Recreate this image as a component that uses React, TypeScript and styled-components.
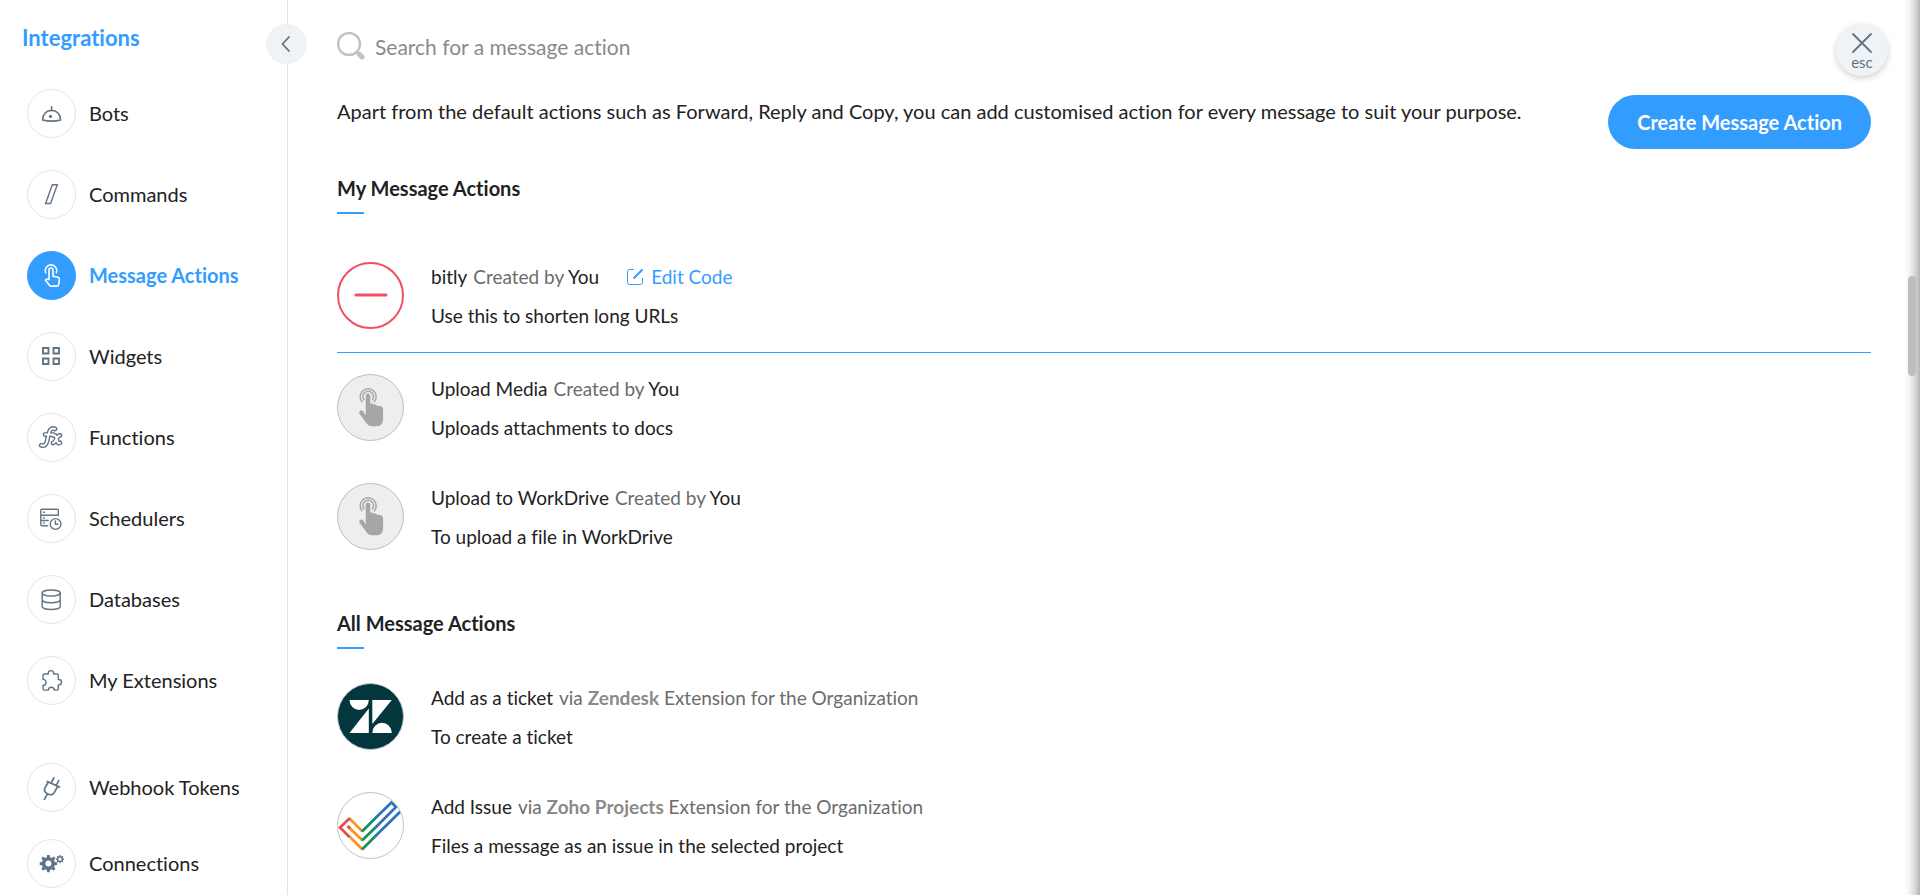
import React from "react";
import styled, { createGlobalStyle, css } from "styled-components";

const GlobalStyle = createGlobalStyle`
  *, *::before, *::after { box-sizing: border-box; }
  body {
    margin: 0;
    background: #fff;
    color: #222;
    font-family: Lato, "Liberation Sans", sans-serif;
    font-size: 20px;
    font-variant-ligatures: no-common-ligatures;
  }
  button, input { font: inherit; color: inherit; font-variant-ligatures: inherit; }
`;

const BLUE = "#339cff";
const SLATE = "#627384";

const Shell = styled.div`
  position: relative;
  display: flex;
  min-height: 100vh;
  overflow: hidden;
`;

const Sidebar = styled.aside`
  position: relative;
  flex: 0 0 288px;
  border-right: 1px solid #e3e3e3;
`;

const SidebarTitle = styled.h1`
  margin: 0;
  padding: 23px 0 0 22px;
  color: ${BLUE};
  font-size: 22px;
  line-height: 30px;
  font-weight: 700;
`;

const CollapseButton = styled.button`
  position: absolute;
  top: 24px;
  right: -20px;
  display: grid;
  place-items: center;
  width: 41px;
  height: 40px;
  padding: 0;
  border: 0;
  border-radius: 50%;
  background: #eff3f6;
  z-index: 1;
`;

const NavList = styled.ul<{ $gap: number; $top: number }>`
  display: flex;
  flex-direction: column;
  gap: ${(p) => p.$gap}px;
  margin: ${(p) => p.$top}px 0 0;
  padding: 0 0 0 27px;
  list-style: none;
`;

const NavLink = styled.a<{ $active: boolean }>`
  display: flex;
  align-items: center;
  gap: 13px;
  color: ${(p) => (p.$active ? BLUE : "#222")};
  font-size: 20px;
  line-height: 24px;
  font-weight: ${(p) => (p.$active ? 700 : 400)};
  text-decoration: none;
`;

const NavLabel = styled.span`
  padding-bottom: 2px;
`;

const NavIcon = styled.span<{ $active: boolean }>`
  display: block;
  width: 49px;
  height: 49px;
  border: 1px solid ${(p) => (p.$active ? BLUE : "#e3e5e7")};
  border-radius: 50%;
  background: ${(p) => (p.$active ? BLUE : "#fff")};
  color: ${(p) => (p.$active ? "#fff" : SLATE)};

  svg {
    display: block;
    margin: -1px;
  }
`;

const Main = styled.main`
  flex: 1;
  min-width: 0;
  padding: 27px 49px 0;
`;

const SearchBar = styled.label`
  display: flex;
  align-items: center;
  gap: 10px;
  height: 40px;
  margin-right: 120px;
`;

const SearchInput = styled.input`
  flex: 1;
  min-width: 0;
  padding: 0;
  border: 0;
  outline: 0;
  background: none;
  font-size: 21px;
  line-height: 28px;

  &::placeholder { color: #8a8a8a; opacity: 1; }
`;

const EscButton = styled.button`
  position: absolute;
  top: 24px;
  right: 32px;
  display: flex;
  flex-direction: column;
  align-items: center;
  width: 52px;
  height: 52px;
  padding: 9px 0 0;
  border: 0;
  border-radius: 50%;
  background: #eff3f6;
  box-shadow: 0 2px 6px rgba(0, 0, 0, 0.2);
  color: ${SLATE};
  font-size: 15px;
  line-height: 18px;
`;

const Intro = styled.div`
  display: flex;
  justify-content: space-between;
  align-items: flex-start;
  gap: 24px;
  margin-top: 28px;
`;

const IntroText = styled.p`
  margin: 0;
  font-size: 20px;
  line-height: 32px;
`;

const CreateButton = styled.button`
  flex: none;
  height: 54px;
  padding: 0 29px;
  border: 0;
  border-radius: 27px;
  background: ${BLUE};
  color: #fff;
  font-size: 20px;
  font-weight: 700;
  white-space: nowrap;
`;

const Section = styled.section<{ $top: number }>`
  margin-top: ${(p) => p.$top}px;
`;

const SectionTitle = styled.h2`
  margin: 0;
  font-size: 20px;
  line-height: 28px;
  font-weight: 700;

  &::after {
    content: "";
    display: block;
    width: 27px;
    height: 2px;
    margin-top: 10px;
    background: ${BLUE};
  }
`;

const ActionList = styled.ul<{ $top: number }>`
  margin: ${(p) => p.$top}px 0 0;
  padding: 0;
  list-style: none;
`;

const ActionRow = styled.li<{ $selected: boolean }>`
  display: flex;
  align-items: center;
  gap: 27px;
  padding: 14px 0 15px;
  ${(p) =>
    p.$selected &&
    css`
      padding-bottom: 17px;
      border-bottom: 1px solid ${BLUE};
    `}
`;

const Avatar = styled.span`
  flex: none;
  width: 67px;
  height: 67px;

  svg { display: block; }
`;

const RemoveButton = styled.button`
  display: block;
  width: 67px;
  height: 67px;
  padding: 0;
  border: 0;
  background: none;
`;

const ActionText = styled.div`
  padding-top: 2px;
  font-size: 19px;
  line-height: 39px;

  p { margin: 0; }
`;

const Headline = styled.p`
  display: flex;
`;

const Meta = styled.span`
  margin-left: 6px;
  color: #6c6c6c;

  em { color: #222; font-style: normal; }
  strong { color: #8a8a8a; font-weight: 700; }
`;

const EditLink = styled.a`
  display: inline-flex;
  align-items: center;
  gap: 7px;
  margin-left: 28px;
  color: ${BLUE};
  text-decoration: none;
`;

const EdgeShadow = styled.div`
  position: absolute;
  inset: 0 0 0 auto;
  width: 16px;
  background: linear-gradient(to left, #b4b4b4, #dcdcdc 35%, #f6f6f6 70%, #fff);
  pointer-events: none;
`;

const ScrollThumb = styled.div`
  position: absolute;
  top: 276px;
  right: 4px;
  width: 8px;
  height: 100px;
  border-radius: 4px;
  background: #bdbdbd;
`;

const Glyph = ({ children }: { children: React.ReactNode }) => (
  <svg
    width="49"
    height="49"
    viewBox="0 0 49 49"
    fill="none"
    stroke="currentColor"
    strokeWidth="1.4"
    strokeLinecap="round"
    strokeLinejoin="round"
    aria-hidden="true"
  >
    {children}
  </svg>
);

const gearPath = (cx: number, cy: number, outer: number, inner: number, hole: number, teeth: number) => {
  const step = (Math.PI * 2) / teeth;
  const pts: string[] = [];
  for (let i = 0; i < teeth; i++) {
    const a = i * step;
    [
      [inner, -0.3],
      [outer, -0.19],
      [outer, 0.19],
      [inner, 0.3],
    ].forEach(([r, k]) => {
      pts.push(`${(cx + r * Math.cos(a + k * step)).toFixed(2)} ${(cy + r * Math.sin(a + k * step)).toFixed(2)}`);
    });
  }
  return `M${pts.join("L")}Z M${cx - hole} ${cy}a${hole} ${hole} 0 1 0 ${hole * 2} 0a${hole} ${hole} 0 1 0 ${-hole * 2} 0Z`;
};

const FX_PATH = "M14.2 32.3c3.2 1.2 5-.6 5.8-4l2-8.6c.8-3.6 3-5 6-3.8M18 21.6h8.2M26.2 22.6c2.4-1 2.7.6 3.4 3.4s1.4 5 3.4 3.8M33 22.4c-3-.6-3.6 6.8-7 7.6";

const icons: Record<string, React.ReactNode> = {
  bots: (
    <Glyph>
      <path d="M15.6 31c0-5.800 3.900-9.600 9-9.600s9 3.800 9 9.600c-5.400 1.400-12.600 1.400-18 0ZM24.600 21.400v-3.700" strokeWidth="1.600" />
      <circle cx="23.500" cy="27.400" r="1.600" fill="currentColor" stroke="none" />
    </Glyph>
  ),
  commands: (
    <Glyph>
      <path d="M18.600 33.500 25.300 14.700h5L23.600 33.500Z" strokeLinejoin="miter" />
    </Glyph>
  ),
  actions: (
    <Glyph>
      <path
        d="M18.600 21.800a5.800 5.800 0 1 1 10.800 0M22 28.600V19a2 2 0 0 1 4 0v6.200l4.800 1c1.200.300 1.700 1 1.600 2.200l-.6 4.800c-.2 1.300-.9 1.900-2.100 1.900h-5.400c-.8 0-1.400-.3-1.900-.9l-4-5.100c1-1.400 2.200-1.500 3.600-.5Z"
        strokeWidth="1.600"
      />
    </Glyph>
  ),
  widgets: (
    <Glyph>
      <g strokeWidth="1.900" strokeLinejoin="miter">
        <path d="M16 16h5.500v5.500H16ZM26.500 16H32v5.500h-5.500ZM16 26.500h5.500V32H16ZM26.500 26.500H32V32h-5.500Z" />
      </g>
    </Glyph>
  ),
  functions: (
    <Glyph>
      <path d={FX_PATH} strokeWidth="4.800" />
      <path d={FX_PATH} strokeWidth="2" stroke="#fff" />
    </Glyph>
  ),
  schedulers: (
    <Glyph>
      <path d="M31.300 21.500v-5c0-.8-.4-1.200-1.200-1.200H15c-.8 0-1.200.4-1.200 1.200v14c0 .8.400 1.200 1.200 1.200h5.500M13.800 21.300h17.500M13.800 26.500h7.500" />
      <path d="M16.500 18.300h.8M16.500 24h.8M16.500 29h.8" />
      <circle cx="28.600" cy="30" r="5.400" />
      <path d="M28.400 27v3.300h2.400" />
    </Glyph>
  ),
  databases: (
    <Glyph>
      <ellipse cx="24.200" cy="18" rx="9" ry="3" />
      <path d="M15.200 18v13.500c0 1.700 4 3 9 3s9-1.300 9-3V18M15.200 24.700c0 1.700 4 3 9 3s9-1.300 9-3" />
    </Glyph>
  ),
  extensions: (
    <Glyph>
      <path d="M16 21v-1.500c0-1 .5-1.500 1.500-1.500h3.700v-.7a2.700 2.700 0 0 1 5.400 0v.7h3.200c1 0 1.500.5 1.500 1.500v4h.5a2.700 2.700 0 0 1 0 5.400h-.5v3.700c0 1-.5 1.500-1.500 1.500h-2.600a2.900 2.900 0 0 0-5.800 0h-3.900c-1 0-1.500-.5-1.500-1.500v-3.200a3 3 0 0 0 0-6Z" />
    </Glyph>
  ),
  webhook: (
    <Glyph>
      <path d="M20.200 18.500l12.300 5.600M21.300 19l-3.200 5.600c-1 2-.5 4.300 1.500 5.700l2 1c2.300.9 4.500.2 5.700-1.700l3-5.600M20.400 31l-3 5.300M24.200 20l2.600-5M29.200 22.300l2.600-4.600" strokeWidth="1.700" />
    </Glyph>
  ),
  connections: (
    <Glyph>
      <g fill="currentColor" fillRule="evenodd" stroke="none">
        <path d={gearPath(21.400, 24.600, 8.800, 6.600, 3, 8)} />
        <path d={gearPath(33, 20.200, 4.200, 3.100, 1.600, 8)} />
      </g>
    </Glyph>
  ),
};

const RemoveGraphic = () => (
  <svg width="67" height="67" viewBox="0 0 67 67" fill="none" stroke="#f0505f" aria-hidden="true">
    <circle cx="33.500" cy="33.500" r="32.500" strokeWidth="2" />
    <path d="M19 33h30" strokeWidth="3" strokeLinecap="round" />
  </svg>
);

const TapGraphic = () => (
  <svg width="67" height="67" viewBox="0 0 67 67" aria-hidden="true">
    <circle cx="33.500" cy="33.500" r="33" fill="#eee" stroke="#bdbdbd" />
    <g fill="none" stroke="#a6a6a6" strokeWidth="1.500">
      <path d="M25.500 28.300a8 8 0 1 1 11.400 0" />
      <path d="M27.300 26.200a5.300 5.300 0 1 1 7.800 0" />
    </g>
    <path
      fill="#a6a6a6"
      d="M28.700 41.500V21.800a2.300 2.300 0 0 1 4.600 0v8c1.300-.6 2.700-.2 3.300.9 1.500-.5 2.900 0 3.500 1.200 2.700-.6 6 .4 6 3.600v9.300c0 4.500-2.300 7.400-6 7.400h-5.600c-2 0-3.400-.8-4.600-2.400l-7.200-9.700c-1.500-2.200.7-4.800 3.200-3.200Z"
    />
  </svg>
);

const ZendeskGraphic = () => (
  <svg width="67" height="67" viewBox="0 0 67 67" aria-hidden="true">
    <circle cx="33.500" cy="33.500" r="33" fill="#03363d" stroke="#c4cbcd" strokeWidth="1" />
    <path
      fill="#fff"
      d="M12.500 17h19.300a9.650 10 0 0 1-19.300 0ZM31.800 25.500V50H12.500ZM35.300 17h19.500L35.300 41ZM35.300 50a9.750 10.300 0 0 1 19.500 0Z"
    />
  </svg>
);

const ProjectsGraphic = () => (
  <svg width="67" height="67" viewBox="0 0 67 67" fill="none" strokeWidth="2.700" aria-hidden="true">
    <defs>
      <clipPath id="projects-disc">
        <circle cx="33.500" cy="33.500" r="33" />
      </clipPath>
    </defs>
    <g clipPath="url(#projects-disc)">
      <path stroke="#f7931e" d="M12.500 26.500 25.500 39.500M11.500 35 25.500 48.500M12.500 44.500 25.500 57.500" />
      <path stroke="#e04f4a" d="M13 26 3 35.500 12.500 45M10.500 34l2.600 2.500" />
      <path stroke="#149063" d="M25 39.500 39.500 25M25 48.500 39.500 34.500M25 57.500 39.500 43" />
      <path stroke="#2f73c0" d="M39 25.500 54.500 10.500 59 15 39 35M39 43.500 67 16" />
    </g>
    <circle cx="33.500" cy="33.500" r="33" stroke="#c2c2c2" strokeWidth="1" />
  </svg>
);

const primaryNav = [
  ["bots", "Bots"],
  ["commands", "Commands"],
  ["actions", "Message Actions"],
  ["widgets", "Widgets"],
  ["functions", "Functions"],
  ["schedulers", "Schedulers"],
  ["databases", "Databases"],
  ["extensions", "My Extensions"],
];

const secondaryNav = [
  ["webhook", "Webhook Tokens"],
  ["connections", "Connections"],
];

const NavItems = ({ items, gap, top }: { items: string[][]; gap: number; top: number }) => (
  <NavList $gap={gap} $top={top}>
    {items.map(([id, label]) => (
      <li key={id}>
        <NavLink href={`#${id}`} $active={id === "actions"} aria-current={id === "actions" ? "page" : undefined}>
          <NavIcon $active={id === "actions"}>{icons[id]}</NavIcon>
          <NavLabel>{label}</NavLabel>
        </NavLink>
      </li>
    ))}
  </NavList>
);

type ActionProps = {
  name: string;
  meta: React.ReactNode;
  description: string;
  graphic: React.ReactNode;
  selected?: boolean;
};

const Action = ({ name, meta, description, graphic, selected = false }: ActionProps) => (
  <ActionRow $selected={selected}>
    <Avatar>{graphic}</Avatar>
    <ActionText>
      <Headline>
        {name}
        <Meta>{meta}</Meta>
        {selected && (
          <EditLink href="#edit">
            <svg width="17" height="17" viewBox="0 0 17 17" fill="none" stroke="currentColor" aria-hidden="true">
              <path d="M7 1.500H2.500a2 2 0 0 0-2 2v11a2 2 0 0 0 2 2h11a2 2 0 0 0 2-2V10" />
              <path d="M6.500 10.500 15.500 1.500" strokeWidth="2.200" />
            </svg>
            Edit Code
          </EditLink>
        )}
      </Headline>
      <p>{description}</p>
    </ActionText>
  </ActionRow>
);

const createdByYou = (
  <>
    Created by <em>You</em>
  </>
);

const viaExtension = (product: string) => (
  <>
    via <strong>{product}</strong> Extension for the Organization
  </>
);

export default function App() {
  return (
    <>
      <GlobalStyle />
      <Shell>
        <Sidebar>
          <SidebarTitle>Integrations</SidebarTitle>
          <CollapseButton type="button" aria-label="Collapse sidebar">
            <svg width="12" height="18" viewBox="0 0 12 18" fill="none" stroke={SLATE} strokeWidth="1.800">
              <path d="M8.500 1.500 1.500 9l7 7.500" />
            </svg>
          </CollapseButton>
          <nav aria-label="Integrations">
            <NavItems items={primaryNav} gap={32} top={36} />
            <NavItems items={secondaryNav} gap={27} top={58} />
          </nav>
        </Sidebar>

        <Main>
          <SearchBar>
            <svg width="28" height="30" viewBox="0 0 28 30" fill="none" stroke="#c2c2c2" aria-hidden="true">
              <circle cx="12" cy="12" r="11" strokeWidth="2.400" />
              <path d="M22.500 22.500 25 25" strokeWidth="5" strokeLinecap="round" />
              <path d="M20.500 20.500 22 22" strokeWidth="2.500" />
            </svg>
            <SearchInput type="text" placeholder="Search for a message action" aria-label="Search for a message action" />
          </SearchBar>

          <Intro>
            <IntroText>
              Apart from the default actions such as Forward, Reply and Copy, you can add customised action for every
              message to suit your purpose.
            </IntroText>
            <CreateButton type="button">Create Message Action</CreateButton>
          </Intro>

          <Section $top={25}>
            <SectionTitle>My Message Actions</SectionTitle>
            <ActionList $top={27}>
              <Action
                selected
                name="bitly"
                meta={createdByYou}
                description="Use this to shorten long URLs"
                graphic={
                  <RemoveButton type="button" aria-label="Remove bitly">
                    <RemoveGraphic />
                  </RemoveButton>
                }
              />
              <Action name="Upload Media" meta={createdByYou} description="Uploads attachments to docs" graphic={<TapGraphic />} />
              <Action name="Upload to WorkDrive" meta={createdByYou} description="To upload a file in WorkDrive" graphic={<TapGraphic />} />
            </ActionList>
          </Section>

          <Section $top={38}>
            <SectionTitle>All Message Actions</SectionTitle>
            <ActionList $top={13}>
              <Action name="Add as a ticket" meta={viaExtension("Zendesk")} description="To create a ticket" graphic={<ZendeskGraphic />} />
              <Action
                name="Add Issue"
                meta={viaExtension("Zoho Projects")}
                description="Files a message as an issue in the selected project"
                graphic={<ProjectsGraphic />}
              />
            </ActionList>
          </Section>
        </Main>

        <EscButton type="button" aria-label="Close, esc">
          <svg width="20" height="20" viewBox="0 0 20 20" fill="none" stroke={SLATE} strokeWidth="1.800" strokeLinecap="round">
            <path d="M1 1l18 18M19 1 1 19" />
          </svg>
          esc
        </EscButton>
        <EdgeShadow />
        <ScrollThumb />
      </Shell>
    </>
  );
}
